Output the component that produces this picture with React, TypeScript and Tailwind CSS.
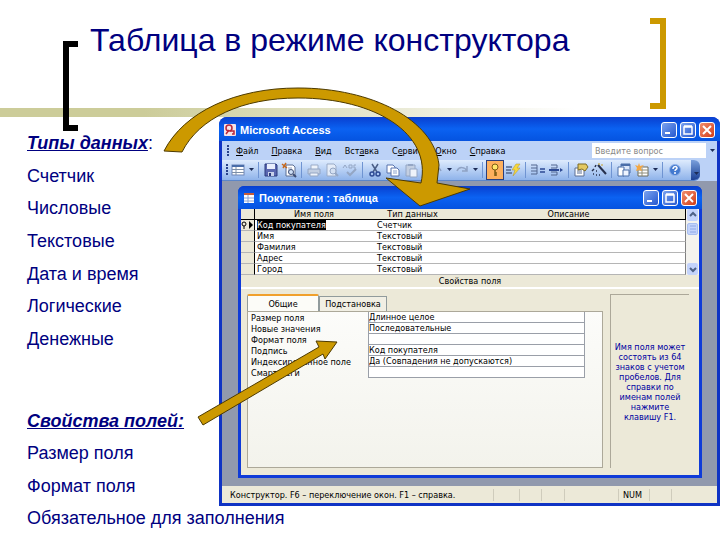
import React from 'react';
import clsx from 'clsx';

const dataTypes = ['Счетчик', 'Числовые', 'Текстовые', 'Дата и время', 'Логические', 'Денежные'];
const fieldOptions = ['Размер поля', 'Формат поля', 'Обязательное для заполнения'];

const menuItems = [
  ['', 'Ф', 'айл'],
  ['', 'П', 'равка'],
  ['', 'В', 'ид'],
  ['Вст', 'а', 'вка'],
  ['С', 'е', 'рвис'],
  ['', 'О', 'кно'],
  ['', 'С', 'правка'],
];

const tableFields = [
  { name: 'Код покупателя', type: 'Счетчик' },
  { name: 'Имя', type: 'Текстовый' },
  { name: 'Фамилия', type: 'Текстовый' },
  { name: 'Адрес', type: 'Текстовый' },
  { name: 'Город', type: 'Текстовый' },
];

const properties = [
  { id: 'size', label: 'Размер поля', value: 'Длинное целое' },
  { id: 'new-values', label: 'Новые значения', value: 'Последовательные' },
  { id: 'format', label: 'Формат поля', value: '' },
  { id: 'caption', label: 'Подпись', value: 'Код покупателя' },
  { id: 'indexed', label: 'Индексированное поле', value: 'Да (Совпадения не допускаются)' },
  { id: 'smart-tags', label: 'Смарт-теги', value: '' },
];

function Icon({ children }: { children: React.ReactNode }) {
  return (
    <svg className="h-4 w-4 shrink-0" viewBox="0 0 16 16" fill="none">
      {children}
    </svg>
  );
}

const TableIcon = () => (
  <Icon>
    <rect x="2" y="3" width="12" height="10" fill="#fff" stroke="#6f86b8" />
    <path d="M2 4h12" stroke="#4a6ea9" strokeWidth="2" />
    <path d="M2 7.5h12M2 10.5h12M6 5v8" stroke="#7d8fa8" />
  </Icon>
);

const SaveIcon = () => (
  <Icon>
    <path d="M2 2h11l1 1v11H2z" fill="#5a67b0" stroke="#2b3a7d" />
    <path d="M4 2h8v5H4z" fill="#e8eefc" />
    <path d="M5 10h6v4H5z" fill="#c9d2ea" />
    <path d="M6 11h2v3H6z" fill="#2b3a7d" />
  </Icon>
);

const SearchFileIcon = () => (
  <Icon>
    <path d="M5 3h7l2 2v9H5z" fill="#fff" stroke="#5c6f93" />
    <path d="M1 2l5 4M5 1L2 6" stroke="#c6691d" strokeWidth="1.5" />
    <path d="M7 6h4M7 8h2" stroke="#8b9cba" />
    <circle cx="10" cy="10" r="2.5" fill="#cfe0f7" stroke="#3c4c74" />
    <path d="M12 12l3 3" stroke="#3c4c74" strokeWidth="2" />
  </Icon>
);

const PrintIcon = () => (
  <Icon>
    <path d="M5 7V3h7v4" fill="#eef3fa" stroke="#9babc6" />
    <path d="M2 7h12v5H2z" fill="#c3cfe2" stroke="#94a6c4" />
    <path d="M4 11h8v3H4z" fill="#eef3fa" stroke="#94a6c4" />
  </Icon>
);

const PreviewIcon = () => (
  <Icon>
    <path d="M3 2h7l2 2v10H3z" fill="#e4ecf8" stroke="#9babc6" />
    <circle cx="9" cy="9" r="3" fill="#d4e0f2" stroke="#94a6c4" />
    <path d="M11 11l3 3" stroke="#94a6c4" strokeWidth="2" />
  </Icon>
);

const SpellIcon = () => (
  <Icon>
    <path d="M1 6l2-3 2 3M7 3h3v3H7zM14 3h-2v3h2" stroke="#94a6c4" />
    <path d="M5 10l3 3 6-6" stroke="#94a6c4" strokeWidth="2" />
  </Icon>
);

const CutIcon = () => (
  <Icon>
    <path d="M5 2l5 8M11 2L6 10" stroke="#4c5f87" strokeWidth="1.5" />
    <circle cx="5" cy="12" r="2" stroke="#2d4a94" strokeWidth="1.5" />
    <circle cx="11" cy="12" r="2" stroke="#2d4a94" strokeWidth="1.5" />
  </Icon>
);

const CopyIcon = () => (
  <Icon>
    <path d="M2 3h6l2 2v6H2z" fill="#fff" stroke="#5873ad" />
    <path d="M6 6h6l2 2v6H6z" fill="#fff" stroke="#5873ad" />
    <path d="M8 9h4M8 11h4" stroke="#8ba2cf" />
  </Icon>
);

const PasteIcon = () => (
  <Icon>
    <path d="M3 3h9v11H3z" fill="#c3cfe2" stroke="#94a6c4" />
    <path d="M5 2h5v2H5z" fill="#94a6c4" />
    <path d="M7 7h7v8H7z" fill="#eef3fa" stroke="#94a6c4" />
  </Icon>
);

const UndoIcon = () => (
  <Icon>
    <path d="M3 4v5h5M3 9c2-4 8-5 10 0" stroke="#8fa2c4" strokeWidth="1.5" />
  </Icon>
);

const RedoIcon = () => (
  <Icon>
    <path d="M13 4v5H8M13 9C11 5 5 4 3 9" stroke="#8fa2c4" strokeWidth="1.5" />
  </Icon>
);

const KeyIcon = () => (
  <Icon>
    <circle cx="8" cy="5" r="3" fill="#ffe86a" stroke="#7d5b14" />
    <path d="M8 8v6M8 11h2M8 13h2" stroke="#7d5b14" strokeWidth="1.5" />
  </Icon>
);

const IndexIcon = () => (
  <Icon>
    <path d="M1 5h6M1 8h5M1 11h6" stroke="#53678f" strokeWidth="1.5" />
    <path d="M11 2h4l-3 4h3l-7 8 2-6H7z" fill="#f6d83c" stroke="#b5972a" strokeWidth=".5" />
  </Icon>
);

const InsertRowIcon = () => (
  <Icon>
    <path d="M1 3h6v3H1M1 12h6V9H1M7 6v3" stroke="#53678f" />
    <path d="M10 7h5M10 10h5" stroke="#2d4a94" strokeWidth="1.5" />
  </Icon>
);

const DeleteRowIcon = () => (
  <Icon>
    <path d="M3 3h6v3H3M3 13h6v-3H3" stroke="#53678f" />
    <path d="M1 8h10" stroke="#2d4a94" strokeWidth="2" />
    <path d="M12 6l3 2-3 2z" fill="#2d4a94" />
  </Icon>
);

const PropertiesIcon = () => (
  <Icon>
    <path d="M2 6h9v8H2z" fill="#fff" stroke="#5c6f93" />
    <path d="M4 9h5M4 11h5" stroke="#5c6f93" />
    <path d="M5 2h8l2 3-3 4-3-2-4 1z" fill="#e3c860" stroke="#7c6a24" />
  </Icon>
);

const WandIcon = () => (
  <Icon>
    <path d="M7 3l8 9" stroke="#26304d" strokeWidth="2" />
    <path d="M5 3l-1 2M3 7L1 9M2 12h1M5 13h1M8 13h1M5 9h1" stroke="#26304d" strokeWidth="1.5" />
    <path d="M8 1v2M10 3h2" stroke="#c9a227" />
  </Icon>
);

const DatabaseIcon = () => (
  <Icon>
    <path d="M5 2h9v9H5z" fill="#dbe7fa" stroke="#4a6ea9" />
    <path d="M5 3h9" stroke="#4a6ea9" strokeWidth="2" />
    <path d="M2 5h6v9H2z" fill="#fff" stroke="#4a6ea9" />
    <path d="M7 8h6v6H7z" fill="#eef4ff" stroke="#4a6ea9" />
  </Icon>
);

const NewObjectIcon = () => (
  <Icon>
    <path d="M4 5h10v9H4z" fill="#fff" stroke="#6b6b5a" />
    <path d="M4 8h10M4 11h10M8 6v8" stroke="#8d8d7a" />
    <path d="M1 3l3 1 1-3 1 3 4-1-3 3 1 3-3-1-3 1 1-3z" fill="#f4a742" />
  </Icon>
);

const HelpIcon = () => (
  <Icon>
    <circle cx="8" cy="8" r="5.5" fill="#4379cf" stroke="#8fb2ea" />
    <path d="M6 7c0-3 4-3 4-1 0 2-2 1-2 3M8 10v2" stroke="#fff" strokeWidth="1.5" />
  </Icon>
);

function ToolButton({ label, className, children }: { label: string; className?: string; children: React.ReactNode }) {
  return (
    <button aria-label={label} className={clsx('flex h-5 shrink-0 items-center justify-center', className ?? 'w-[18px]')}>
      {children}
    </button>
  );
}

function Caret() {
  return (
    <svg className="h-1 w-2 shrink-0" viewBox="0 0 8 4">
      <path d="M2 0h5L4.5 3z" fill="#1c2c57" />
    </svg>
  );
}

function Divider() {
  return <span className="mx-[3px] h-4 w-px shrink-0 bg-[#6f94d2]" />;
}

function Grip() {
  return (
    <svg className="h-3 w-1 shrink-0" viewBox="0 0 4 12" fill="#27418a">
      <path d="M1 0h2v2H1zM1 3h2v2H1zM1 6h2v2H1zM1 9h2v2H1z" />
    </svg>
  );
}

function WindowButtons() {
  return (
    <div className="flex gap-[3px]">
      <button aria-label="Свернуть" className="h-4 w-4 rounded-[3px] border border-white bg-linear-to-br from-[#7ba2ee] to-[#2557cf]">
        <svg viewBox="0 0 14 14"><path d="M3 10h5" stroke="#fff" strokeWidth="2" /></svg>
      </button>
      <button aria-label="Развернуть" className="h-4 w-4 rounded-[3px] border border-white bg-linear-to-br from-[#7ba2ee] to-[#2557cf]">
        <svg viewBox="0 0 14 14"><path d="M3 4h8v7H3zM3 3h8" fill="none" stroke="#fff" strokeWidth="1.5" /></svg>
      </button>
      <button aria-label="Закрыть" className="h-4 w-4 rounded-[3px] border border-white bg-linear-to-br from-[#f08c6c] to-[#d03a10]">
        <svg viewBox="0 0 14 14"><path d="M3 3l8 8M11 3l-8 8" stroke="#fff" strokeWidth="2" /></svg>
      </button>
    </div>
  );
}

function MenuBar() {
  return (
    <div className="flex h-[19px] items-center bg-[#bcd2f7] pl-1">
      <Grip />
      <nav className="flex gap-[13px] pl-[6px]">
        {menuItems.map(([before, key, after]) => (
          <button key={before + key + after} className="whitespace-nowrap">
            {before}
            <u>{key}</u>
            {after}
          </button>
        ))}
      </nav>
      <div className="ml-auto flex h-[15px] w-[125px] items-center bg-white">
        <input
          aria-label="Введите вопрос"
          placeholder="Введите вопрос"
          className="min-w-0 flex-1 pl-[3px] placeholder:text-[#888]"
        />
        <button aria-label="Список вопросов" className="flex h-full w-[11px] items-center justify-center bg-[#bcd2f7]">
          <Caret />
        </button>
      </div>
    </div>
  );
}

function ToolBar() {
  return (
    <div className="flex h-[21px] bg-[#bcd2f7]">
      <div className="flex min-w-0 flex-1 items-center overflow-hidden rounded-r-md border-b border-[#5c86c9] bg-linear-to-b from-[#deebfd] to-[#8fb3ea] pl-[3px]">
        <Grip />
        <ToolButton label="Вид"><TableIcon /></ToolButton>
        <ToolButton label="Список видов" className="w-2"><Caret /></ToolButton>
        <Divider />
        <ToolButton label="Сохранить"><SaveIcon /></ToolButton>
        <ToolButton label="Поиск файлов"><SearchFileIcon /></ToolButton>
        <Divider />
        <ToolButton label="Печать"><PrintIcon /></ToolButton>
        <ToolButton label="Предварительный просмотр"><PreviewIcon /></ToolButton>
        <ToolButton label="Орфография"><SpellIcon /></ToolButton>
        <Divider />
        <ToolButton label="Вырезать"><CutIcon /></ToolButton>
        <ToolButton label="Копировать"><CopyIcon /></ToolButton>
        <ToolButton label="Вставить"><PasteIcon /></ToolButton>
        <Divider />
        <ToolButton label="Отменить"><UndoIcon /></ToolButton>
        <ToolButton label="Список отмены" className="w-2"><Caret /></ToolButton>
        <ToolButton label="Вернуть"><RedoIcon /></ToolButton>
        <ToolButton label="Список возврата" className="w-2"><Caret /></ToolButton>
        <Divider />
        <ToolButton label="Ключевое поле" className="w-[18px] border border-[#2c3f7c] bg-[#fdb05e]"><KeyIcon /></ToolButton>
        <ToolButton label="Индексы"><IndexIcon /></ToolButton>
        <Divider />
        <ToolButton label="Добавить строки"><InsertRowIcon /></ToolButton>
        <ToolButton label="Удалить строки"><DeleteRowIcon /></ToolButton>
        <Divider />
        <ToolButton label="Свойства"><PropertiesIcon /></ToolButton>
        <ToolButton label="Построить"><WandIcon /></ToolButton>
        <Divider />
        <ToolButton label="Окно базы данных"><DatabaseIcon /></ToolButton>
        <ToolButton label="Новый объект"><NewObjectIcon /></ToolButton>
        <ToolButton label="Список объектов" className="w-2"><Caret /></ToolButton>
        <Divider />
        <ToolButton label="Справка"><HelpIcon /></ToolButton>
        <button aria-label="Параметры панелей" className="ml-auto flex h-full w-[9px] shrink-0 items-end justify-center bg-linear-to-b from-[#7ba0dc] to-[#1c3f93] pb-1">
          <Caret />
        </button>
      </div>
      <div className="w-[17px]" />
    </div>
  );
}

function ScrollBar() {
  return (
    <div className="flex w-[13px] flex-col justify-between bg-[#f4f3ee] px-px">
      <div className="flex flex-col gap-[2px]">
        <button aria-label="Прокрутить вверх" className="flex h-3 items-center justify-center rounded-xs bg-[#c3d3fb]">
          <svg className="h-2 w-2" viewBox="0 0 8 8"><path d="M1 5l3-3 3 3" fill="none" stroke="#4d6185" strokeWidth="2" /></svg>
        </button>
        <div className="flex h-3 items-center justify-center rounded-xs border border-[#a9bff0] bg-[#c3d3fb]">
          <svg className="h-2 w-2" viewBox="0 0 8 8"><path d="M1 1h6M1 4h6M1 7h6" stroke="#8ea8e6" /></svg>
        </div>
      </div>
      <button aria-label="Прокрутить вниз" className="flex h-3 items-center justify-center rounded-xs bg-[#c3d3fb]">
        <svg className="h-2 w-2" viewBox="0 0 8 8"><path d="M1 3l3 3 3-3" fill="none" stroke="#4d6185" strokeWidth="2" /></svg>
      </button>
    </div>
  );
}

function FieldGrid() {
  return (
    <div className="flex">
      <table className="min-w-0 flex-1 table-fixed border-separate border-spacing-0 bg-white">
        <colgroup>
          <col className="w-[14px]" />
          <col className="w-[118px]" />
          <col className="w-[79px]" />
          <col />
        </colgroup>
        <thead>
          <tr className="h-[11px] bg-[#ece9d8] [&>th]:border-b [&>th]:border-black [&>th]:p-0 [&>th]:font-normal">
            <th className="border-r" aria-label="Выделение" />
            <th>Имя поля</th>
            <th>Тип данных</th>
            <th className="border-r">Описание</th>
          </tr>
        </thead>
        <tbody>
          {tableFields.map((field, i) => (
            <tr key={field.name} className="h-[11px] [&>td]:border-b [&>td]:border-b-[#b5b5b5] [&>td]:p-0">
              <td className="border-r border-r-black bg-[#ece9d8]">
                {i === 0 && (
                  <svg className="h-2 w-3" viewBox="0 0 12 8">
                    <circle cx="3" cy="3" r="2" fill="none" stroke="#000" />
                    <path d="M3 5v3" stroke="#000" />
                    <path d="M8 0l4 4-4 4z" />
                  </svg>
                )}
              </td>
              <td className="whitespace-nowrap">
                <span className={clsx('ml-[2px] inline-block h-[10px]', i === 0 && 'bg-black text-white')}>{field.name}</span>
              </td>
              <td className="whitespace-nowrap"><span className="ml-1">{field.type}</span></td>
              <td className="border-r border-r-[#808080]" />
            </tr>
          ))}
        </tbody>
      </table>
      <ScrollBar />
    </div>
  );
}

function FieldProperties() {
  return (
    <div className="flex flex-1 border-t-2 border-white pt-[5px] pr-[10px] pb-[7px] pl-[6px]">
      <div className="flex flex-1 flex-col">
        <div className="flex items-end">
          <button className="h-[17px] w-[72px] rounded-t-xs border-x border-t-2 border-x-[#919b9c] border-t-[#f0a02c] bg-[#fcfcf8]">Общие</button>
          <button className="h-[15px] w-[68px] border border-b-0 border-[#919b9c] bg-[#f1efe4]">Подстановка</button>
        </div>
        <div className="flex-1 border border-[#aca899] bg-linear-to-b from-[#fcfcfa] to-[#f3f3ec] pr-[17px] pl-[3px]">
          {properties.map((prop) => (
            <div key={prop.id} className="flex h-[11px] items-center">
              <label htmlFor={prop.id} className="w-[117px] whitespace-nowrap">{prop.label}</label>
              <input
                id={prop.id}
                defaultValue={prop.value}
                className="h-[11px] min-w-0 flex-1 border-r border-b border-l border-[#9a9fa8] bg-white"
              />
            </div>
          ))}
        </div>
      </div>
      <div className="ml-[7px] flex w-[79px] items-center justify-center border-t border-l border-[#aca899] text-center leading-[10px] text-[#0000a0]">
        <p>Имя поля может состоять из 64 знаков с учетом пробелов. Для справки по именам полей нажмите клавишу F1.</p>
      </div>
    </div>
  );
}

function TableWindow() {
  return (
    <section className="flex flex-1 flex-col rounded-t-md bg-[#0f3bd8] px-[3px] pb-[3px]">
      <div className="-mx-[3px] flex h-[23px] items-center rounded-t-md bg-linear-to-b from-[#0a3fd0] via-[#0b62f2] to-[#0553e0] px-[5px] text-white">
        <svg className="h-3 w-3" viewBox="0 0 12 12">
          <rect x="1" y="1" width="10" height="10" fill="#fff" />
          <path d="M1 2h10" stroke="#c65d3a" strokeWidth="2" />
          <path d="M1 6h10M1 9h10M5 3v8" stroke="#8aa2d4" />
        </svg>
        <h3 className="flex-1 pl-1 font-['Liberation_Sans',sans-serif] text-[11px] font-bold">Покупатели : таблица</h3>
        <WindowButtons />
      </div>
      <div className="flex flex-1 flex-col bg-[#ece9d8]">
        <FieldGrid />
        <div className="flex h-3 items-center justify-center">Свойства поля</div>
        <FieldProperties />
      </div>
    </section>
  );
}

function AccessWindow() {
  return (
    <section className="flex min-w-0 flex-1 flex-col rounded-t-lg bg-[#0f33c4] px-[3px] pb-[3px] font-['DejaVu_Sans_Condensed','DejaVu_Sans',sans-serif] text-[9px] leading-[10px] text-black">
      <div className="-mx-[3px] flex h-6 items-center rounded-t-lg bg-linear-to-b from-[#0a3fd0] via-[#0b62f2] to-[#0553e0] px-[5px] pt-[2px] text-white">
        <svg className="h-3 w-3" viewBox="0 0 12 12">
          <rect width="12" height="12" rx="1" fill="#f7e3e6" />
          <circle cx="5" cy="4" r="3" fill="none" stroke="#b8273d" strokeWidth="1.5" />
          <path d="M6 7h4v3H8M2 10l3-4" fill="none" stroke="#b8273d" strokeWidth="1.5" />
        </svg>
        <h2 className="flex-1 pl-1 font-['Liberation_Sans',sans-serif] text-[11px] font-bold">Microsoft Access</h2>
        <WindowButtons />
      </div>
      <MenuBar />
      <ToolBar />
      <div className="flex flex-1 bg-[#9199ad] pt-[5px] pr-[15px] pb-[8px] pl-4">
        <TableWindow />
      </div>
      <footer className="flex h-[17px] items-center bg-[#ece9d8] pl-2">
        <span className="flex-1 whitespace-nowrap">Конструктор. F6 – переключение окон. F1 – справка.</span>
        <span className="h-3 w-[26px] border-l border-[#cfccbc]" />
        <span className="h-3 w-[22px] border-l border-[#cfccbc]" />
        <span className="h-3 w-[23px] border-l border-[#cfccbc]" />
        <span className="h-3 w-[54px] border-l border-[#cfccbc]" />
        <span className="h-3 w-[31px] border-l border-[#cfccbc] pl-1 leading-3">NUM</span>
        <span className="h-3 w-[22px] border-l border-[#cfccbc]" />
        <span className="h-3 w-[46px] border-l border-[#cfccbc]" />
      </footer>
    </section>
  );
}

function Arrows() {
  return (
    <svg className="pointer-events-none absolute top-0 left-0 h-[540px] w-[720px]" viewBox="0 0 720 540" fill="#cc9900" stroke="#4d3a00">
      <path d="M164 151C184 112 235 88 298 88C372 88 434 120 439 165L437 183L470 189L420 206L386 178L421 183C432 134 376 98 298 98C242 98 199 118 182 152Z" />
      <path d="M198 417L319 347L316 341L337 342L325 359L323 354L203 425Z" />
    </svg>
  );
}

export default function App() {
  return (
    <main className="relative min-h-screen overflow-hidden bg-white font-['Liberation_Sans',sans-serif] text-[#000080]">
      <header className="relative flex h-[108px] justify-between pr-[54px] pl-[90px]">
        <div className="absolute top-[41px] left-[63px] z-10 h-[90px] w-[15px] border-y-[6px] border-l-[6px] border-black" />
        <h1 className="pt-5 text-[32px] leading-10 whitespace-nowrap">Таблица в режиме конструктора</h1>
        <div className="mt-[18px] h-[91px] w-4 shrink-0 border-y-[6px] border-r-[6px] border-[#cc9900]" />
      </header>
      <div className="h-[9px] bg-linear-to-r from-[#cccc99] from-20% to-white to-80%" />
      <div className="flex">
        <aside className="flex w-[219px] shrink-0 flex-col justify-between pt-4 pl-[27px] text-[18px] leading-5 whitespace-nowrap">
          <div className="flex h-[216px] flex-col justify-between">
            <h2>
              <b className="italic underline">Типы данных</b>:
            </h2>
            {dataTypes.map((item) => (
              <p key={item}>{item}</p>
            ))}
          </div>
          <div className="-mb-[22px] flex h-[117px] flex-col justify-between">
            <h2 className="font-bold italic underline">Свойства полей:</h2>
            {fieldOptions.map((item) => (
              <p key={item}>{item}</p>
            ))}
          </div>
        </aside>
        <div className="flex h-[389px] min-w-0 flex-1">
          <AccessWindow />
        </div>
      </div>
      <Arrows />
    </main>
  );
}
